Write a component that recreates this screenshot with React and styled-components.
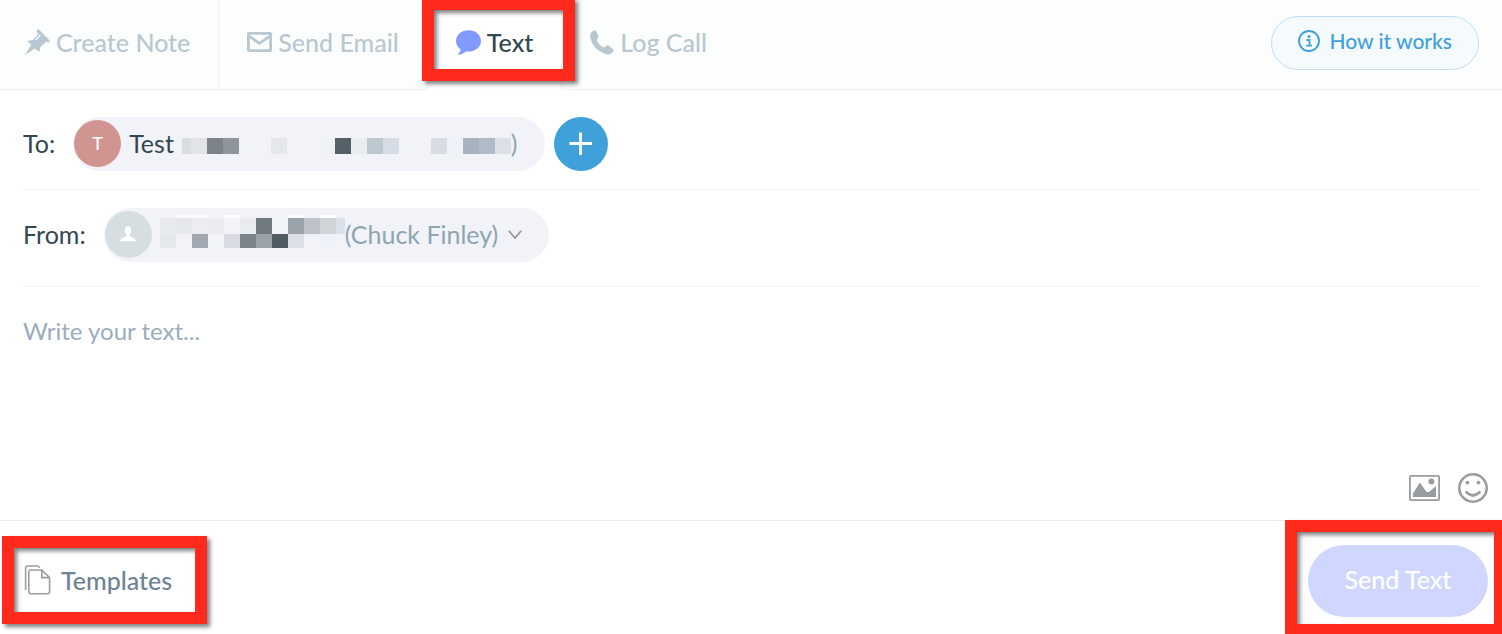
import styled, { createGlobalStyle } from "styled-components";

const GlobalStyle = createGlobalStyle`
    * {
        box-sizing: border-box;
    }

    body {
        margin: 0;
        background-color: #fff;
        color: #33474f;
        font-family: Lato, "Liberation Sans", sans-serif;
        font-size: 25px;
        line-height: 32px;
    }

    button, select, textarea {
        border: 0;
        margin: 0;
        padding: 0;
        background: none;
        color: inherit;
        font: inherit;
    }

    svg {
        display: block;
        flex-shrink: 0;
    }
`;

const Page = styled.main`
    overflow: hidden;
`;

const Header = styled.header`
    display: flex;
    align-items: stretch;
    height: 90px;
    background-color: #fcfefd;
    box-shadow: inset 0 -1px #eff3f4;
`;

const Tabs = styled.nav`
    display: flex;
    flex: 1;
`;

const Tab = styled.button`
    position: relative;
    display: flex;
    align-items: center;
    gap: 6px;
    padding: 0 28px 6px;
    color: ${(props) => (props.$active ? "#33474f" : "#b9c7d0")};
    background-color: ${(props) => (props.$active ? "#fff" : "transparent")};
    border-right: ${(props) => (props.$divider ? "1px solid #eff3f4" : "0")};
    font-weight: 500;
    white-space: nowrap;

    &:first-child {
        padding-left: 25px;
    }
`;

const Frame = styled.span`
    position: absolute;
    z-index: 2;
    inset: ${(props) => props.$inset};
    border: 12px solid #ff2a1c;
    filter: drop-shadow(3px 3px 2px rgba(0, 0, 0, 0.5));
    pointer-events: none;
`;

const HelpButton = styled.button`
    display: flex;
    align-items: center;
    align-self: center;
    gap: 9px;
    height: 54px;
    margin: 0 23px 4px 0;
    padding: 0 26px 4px;
    border: 1px solid #c1e0f3;
    border-radius: 27px;
    background-color: #f5fafd;
    color: #40a0da;
    font-size: 21px;
    font-weight: 500;
    white-space: nowrap;
`;

const Fields = styled.section`
    padding: 0 22px 0 23px;
`;

const Row = styled.div`
    display: flex;
    align-items: center;
    padding: ${(props) => props.$padding};
    border-bottom: 1px solid #f2f3f4;
`;

const Label = styled.label`
    padding-bottom: 2px;
`;

const Chip = styled.div`
    display: flex;
    align-items: center;
    height: 54px;
    margin-left: 18px;
    padding: 0 27px 2px 1px;
    border-radius: 27px;
    background-color: #f2f3f8;
`;

const Avatar = styled.span`
    display: flex;
    align-items: center;
    justify-content: center;
    width: 47px;
    height: 47px;
    margin-right: 8px;
    border-radius: 50%;
    background-color: ${(props) => props.$color};
    color: #fff;
    font-size: 18px;
    font-weight: 500;
`;

const Mosaic = styled.span`
    display: flex;
    flex-direction: column;
    margin: ${(props) => props.$margin};
`;

const MosaicRow = styled.span`
    display: flex;
    height: ${(props) => props.$height};
`;

const Cell = styled.span`
    width: ${(props) => (props.$narrow ? "9px" : "16px")};
    background-color: ${(props) => props.$color};
`;

const Muted = styled.span`
    color: #8fa4b2;
`;

const AddButton = styled.button`
    display: flex;
    align-items: center;
    justify-content: center;
    width: 54px;
    height: 54px;
    margin-left: 9px;
    border-radius: 50%;
    background-color: #40a0da;
`;

const Sender = styled.select`
    appearance: none;
    color: #8fa4b2;
    margin-right: 9px;
`;

const Message = styled.textarea`
    display: block;
    width: 100%;
    height: 186px;
    padding-top: 28px;
    outline: 0;
    resize: none;
    font-size: 24px;

    &::placeholder {
        color: #9badbe;
        opacity: 1;
    }
`;

const Tools = styled.div`
    display: flex;
    align-items: center;
    justify-content: flex-end;
    gap: 18px;
    height: 30px;
    margin-bottom: 17px;
    padding-right: 14px;
`;

const Footer = styled.footer`
    display: flex;
    align-items: center;
    justify-content: space-between;
    padding: 24px 14px 17px 24px;
    border-top: 1px solid #e8e9ea;
`;

const Templates = styled.button`
    position: relative;
    display: flex;
    align-items: center;
    gap: 10px;
    padding-bottom: 2px;
    color: #6c8493;
    font-weight: 500;
`;

const SendButton = styled.button`
    position: relative;
    width: 180px;
    height: 72px;
    padding-bottom: 4px;
    border-radius: 36px;
    background-color: #cfd7ff;
    color: #fff;
    font-weight: 500;
`;

const PinIcon = () => (
    <svg width="25" height="27" viewBox="0 0 25 27" fill="currentColor">
        <path d="M13.4 0 L25 11.8 L23.3 13.8 L21.4 12.6 L15.6 18 L14.2 22.8 L9.7 19.4 L0 26 L6.2 16 L2.2 12 L8 11 L13.2 5 L11.3 2.2 Z" />
        <path d="M10.6 10.9 L15.2 6.2" stroke="#fcfefd" strokeWidth="1.5" />
    </svg>
);

const MailIcon = () => (
    <svg width="25" height="20" viewBox="0 0 25 20" fill="none" stroke="currentColor" strokeWidth="2.8">
        <rect x="1.4" y="1.4" width="22.2" height="17.2" rx="0.6" />
        <path d="M2.5 4.3 L12.5 11.4 L22.5 4.3" />
    </svg>
);

const BubbleIcon = () => (
    <svg width="25" height="25" viewBox="0 0 25 25" fill="#809aff">
        <path d="M12.5 0.3 C19.4 0.3 25 4.9 25 11 C25 17 19.4 21.6 12.5 21.6 C11.6 21.6 10.8 21.5 10 21.4 C7.5 23.6 4.8 24.6 1.3 24.5 C3.4 23.1 4.5 21.4 4.6 19.5 C1.8 17.5 0 14.5 0 11 C0 4.9 5.6 0.3 12.5 0.3 Z" />
    </svg>
);

const PhoneIcon = () => (
    <svg width="24" height="25" viewBox="0 0 24 25" fill="currentColor">
        <path d="M5.3 0.4 C4.6 0.1 3.8 0.3 3.2 0.7 C1.4 1.8 0.2 3.3 0.2 5.4 C0.3 10.5 3 15.4 6.9 19 C10.2 22 14.3 24.2 18.3 24.4 C20.5 24.4 22.2 23.2 23.4 21.3 C23.8 20.6 23.8 19.9 23.2 19.3 L18.7 15.7 C18 15.2 17.3 15.2 16.6 15.7 L14.5 17.3 C14 17.7 13.4 17.6 12.9 17.3 C10.5 15.6 8.3 13.3 6.9 10.9 C6.6 10.4 6.7 9.9 7.1 9.4 L8.2 7.8 C8.6 7.2 8.6 6.6 8.3 5.9 L6.4 1.4 C6.2 0.9 5.8 0.6 5.3 0.4 Z" />
    </svg>
);

const InfoIcon = () => (
    <svg width="22" height="22" viewBox="0 0 22 22" fill="none" stroke="currentColor">
        <circle cx="11" cy="11" r="10" strokeWidth="1.9" />
        <circle cx="11" cy="6.6" r="1.5" fill="currentColor" stroke="none" />
        <path d="M8.4 10 H11.5 V15.6 M8.2 15.6 H14" strokeWidth="1.8" />
    </svg>
);

const PlusIcon = () => (
    <svg width="24" height="24" viewBox="0 0 24 24" stroke="#fff" strokeWidth="2.8">
        <path d="M11.5 0.5 V23 M0.5 11.5 H23" />
    </svg>
);

const PersonIcon = () => (
    <svg width="16" height="16" viewBox="0 0 16 16" fill="#fff">
        <path d="M8 0 C10.2 0 11.4 1.7 11.3 4.2 C11.2 6.2 10.6 7.7 9.5 8.6 V10.3 C10.2 11.2 15.6 11.2 16 15.3 H0 C0.4 11.2 5.8 11.2 6.5 10.3 V8.6 C5.4 7.7 4.8 6.2 4.7 4.2 C4.6 1.7 5.8 0 8 0 Z" />
    </svg>
);

const ChevronIcon = () => (
    <svg width="14" height="10" viewBox="0 0 14 10" fill="none" stroke="#939699" strokeWidth="1.7">
        <path d="M0.8 1.8 L7 9 L13.2 1.8" />
    </svg>
);

const ImageIcon = () => (
    <svg width="31" height="26" viewBox="0 0 31 26" fill="#989da1">
        <rect x="0.9" y="0.9" width="29.2" height="24.2" rx="1" fill="none" stroke="#989da1" strokeWidth="1.8" />
        <path d="M4 22 V18.5 L10.8 7.5 L17.2 16.4 Q19.2 18 21.2 16 L27 11 V22 Z" />
        <circle cx="22.3" cy="6.6" r="3" />
    </svg>
);

const SmileIcon = () => (
    <svg width="30" height="30" viewBox="0 0 30 30" fill="#989da1">
        <circle cx="15" cy="15" r="13.7" fill="none" stroke="#989da1" strokeWidth="2.6" />
        <circle cx="9.4" cy="9.6" r="1.9" />
        <circle cx="20.5" cy="9.6" r="1.9" />
        <path d="M8.4 19.2 Q15 25.8 21.6 19.2" fill="none" stroke="#989da1" strokeWidth="2.6" strokeLinecap="round" />
    </svg>
);

const PagesIcon = () => (
    <svg width="27" height="30" viewBox="0 0 27 30" fill="none" stroke="#9b9fa1" strokeWidth="1.6">
        <path d="M1.6 25 V3 Q1.6 1 3.6 1 H13.5 L16 2.4" />
        <path d="M6.5 5 H17.8 L25.6 12.6 V26.6 Q25.6 28.8 23.4 28.8 H7 Q4.8 28.8 4.8 26.6 V6.8 Q4.8 5 6.5 5 Z" />
        <path d="M17.8 5 V12.6 H25.6" />
    </svg>
);

const CHIP = "#f2f3f8";

const recipientCells = [
    "#e0e3e8", "#7b8289", "#8e959c", CHIP, CHIP, "#e4e7ec", CHIP, CHIP, "#f0f1f6", "#556168",
    "#e9ecf1", "#bdc8d0", "#d6dce5", CHIP, CHIP, "#d8dce3", "#eef2f8", "#a6b3be", "#b0bbc8", "#dce0e7",
];

const senderCells = [
    {
        height: "3px",
        colors: [CHIP, "#fafbfd", "#fafbfd", CHIP, "#fff", CHIP, CHIP, CHIP, "#fafbfd", CHIP, "#fff", CHIP],
    },
    {
        height: "16px",
        colors: ["#e7eaef", "#e5e8ed", "#ebedf2", "#eaecf1", CHIP, "#e8ebf0", "#707a80", CHIP, "#9aa2aa", "#bdc1ca", "#d0d3d8", "#dbe1e8"],
    },
    {
        height: "14px",
        colors: ["#e4e7ec", CHIP, "#a1a8b2", CHIP, "#d8dbe1", "#7b8289", "#9aa2aa", "#4f5c64", "#dde0e6", CHIP, "#eef2f8", CHIP],
    },
];

export default function App() {
    return (
        <Page>
            <GlobalStyle />
            <Header>
                <Tabs>
                    <Tab $divider><PinIcon />Create Note</Tab>
                    <Tab $divider><MailIcon />Send Email</Tab>
                    <Tab $active $divider>
                        <BubbleIcon />
                        Text
                        <Frame $inset="-2px -14px 9px -6px" />
                    </Tab>
                    <Tab><PhoneIcon />Log Call</Tab>
                </Tabs>
                <HelpButton><InfoIcon />How it works</HelpButton>
            </Header>
            <Fields>
                <Row $padding="27px 0 18px">
                    <Label as="span">To:</Label>
                    <Chip>
                        <Avatar $color="#d09590">T</Avatar>
                        <span>Test</span>
                        <Mosaic $margin="6px 0 0 8px">
                            <MosaicRow $height="16px">
                                <Cell $color="#d9dce1" $narrow />
                                {recipientCells.map((color, i) => (
                                    <Cell key={i} $color={color} />
                                ))}
                            </MosaicRow>
                        </Mosaic>
                        <Muted>)</Muted>
                    </Chip>
                    <AddButton aria-label="Add recipient"><PlusIcon /></AddButton>
                </Row>
                <Row $padding="18px 0 24px">
                    <Label htmlFor="sender">From:</Label>
                    <Chip>
                        <Avatar $color="#d6dee1"><PersonIcon /></Avatar>
                        <Mosaic $margin="0 0 6px">
                            {senderCells.map((row) => (
                                <MosaicRow key={row.height} $height={row.height}>
                                    {row.colors.map((color, i) => (
                                        <Cell key={i} $color={color} $narrow={i === row.colors.length - 1} />
                                    ))}
                                </MosaicRow>
                            ))}
                        </Mosaic>
                        <Sender id="sender">
                            <option>(Chuck Finley)</option>
                        </Sender>
                        <ChevronIcon />
                    </Chip>
                </Row>
                <Message aria-label="Message" placeholder="Write your text..." />
            </Fields>
            <Tools>
                <button aria-label="Add image"><ImageIcon /></button>
                <button aria-label="Add emoji"><SmileIcon /></button>
            </Tools>
            <Footer>
                <Templates>
                    <PagesIcon />
                    Templates
                    <Frame $inset="-28px -35px -26px -22px" />
                </Templates>
                <SendButton>
                    Send Text
                    <Frame $inset="-25px -18px -19px -23px" />
                </SendButton>
            </Footer>
        </Page>
    );
}
